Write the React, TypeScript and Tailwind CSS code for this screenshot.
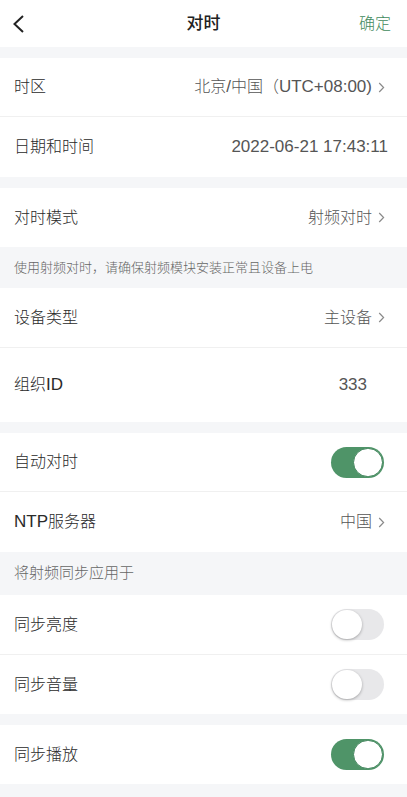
import React from 'react';

const font = { fontFamily: '"Liberation Sans", "Noto Sans CJK SC", sans-serif' };

const Chevron = () => (
  <svg width="7" height="11" viewBox="0 0 7 11" className="ml-[6px] shrink-0">
    <path d="M1.2 1 L5.6 5.5 L1.2 10" fill="none" stroke="#8a8a8a" strokeWidth="1.2" />
  </svg>
);

const Toggle = ({ on }: { on: boolean }) =>
  on ? (
    <div className="w-[53px] h-[31px] rounded-full bg-[#4f9468] flex items-center justify-end pr-[1px]">
      <div className="w-[30px] h-[29px] rounded-full bg-white border-[1.5px] border-[#3f845a]" />
    </div>
  ) : (
    <div className="w-[53px] h-[31px] rounded-full bg-[#e8e8ea] flex items-center pl-[1px]">
      <div className="w-[30px] h-[29px] rounded-full bg-white shadow-[0_1px_3px_rgba(0,0,0,0.3)]" />
    </div>
  );

const Row = ({
  label,
  value,
  chevron,
  right,
  h = 'h-[59px]',
  border = true,
  pr = 'pr-[22px]',
}: {
  label: React.ReactNode;
  value?: React.ReactNode;
  chevron?: boolean;
  right?: React.ReactNode;
  h?: string;
  border?: boolean;
  pr?: string;
}) => (
  <div className={`${h} bg-white flex items-center justify-between pl-[14px] ${pr} ${border ? 'border-b border-[#f0f0f0]' : ''}`}>
    <span className="text-[16px] font-light text-[#2a2a2a]">{label}</span>
    {right ?? (
      <div className="flex items-center text-[16px] font-light text-[#555]">
        <span>{value}</span>
        {chevron && <Chevron />}
      </div>
    )}
  </div>
);

const Gap = () => <div className="h-[11px] bg-[#f5f6f8]" />;

export default function App() {
  return (
    <div className="w-[407px] h-[797px] bg-[#f5f6f8] overflow-hidden" style={font}>
      <div className="h-[47px] bg-white flex items-center justify-between px-[12px] relative">
        <svg width="14" height="20" viewBox="0 0 14 20">
          <path d="M11 2 L2.5 10 L11 18" fill="none" stroke="#222" strokeWidth="2" />
        </svg>
        <span className="absolute left-1/2 -translate-x-1/2 text-[17px] font-medium text-[#222]">对时</span>
        <span className="text-[16px] font-light text-[#3f8a5c] mr-[4px]">确定</span>
      </div>
      <Gap />
      <Row
        label="时区"
        value={
          <>
            北京<span className="text-[17px]">/</span>中国（<span className="text-[17px]">UTC+08:00)</span>
          </>
        }
        chevron
      />
      <Row
        label="日期和时间"
        value={<span className="text-[17px]">2022-06-21 17:43:11</span>}
        border={false}
        pr="pr-[19px]"
        h="h-[60px]"
      />
      <Gap />
      <Row label="对时模式" value="射频对时" chevron border={false} />
      <div className="h-[41px] flex items-center pl-[14px] text-[13px] font-light text-[#666]">
        使用射频对时，请确保射频模块安装正常且设备上电
      </div>
      <Row label="设备类型" value="主设备" chevron h="h-[60px]" />
      <Row
        label={<>组织<span className="text-[17px]">ID</span></>}
        value={<span className="text-[17px]">333</span>}
        border={false}
        h="h-[74px]"
        pr="pr-[40px]"
      />
      <Gap />
      <Row label="自动对时" right={<Toggle on />} pr="pr-[23px]" />
      <Row label={<><span className="text-[17px]">NTP</span>服务器</>} value="中国" chevron border={false} h="h-[60px]" />
      <div className="h-[43px] flex items-center pl-[14px] text-[15px] font-light text-[#666]">将射频同步应用于</div>
      <Row label="同步亮度" right={<Toggle on={false} />} pr="pr-[23px]" h="h-[60px]" />
      <Row label="同步音量" right={<Toggle on={false} />} pr="pr-[23px]" border={false} />
      <Gap />
      <Row label="同步播放" right={<Toggle on />} pr="pr-[23px]" border={false} />
    </div>
  );
}
